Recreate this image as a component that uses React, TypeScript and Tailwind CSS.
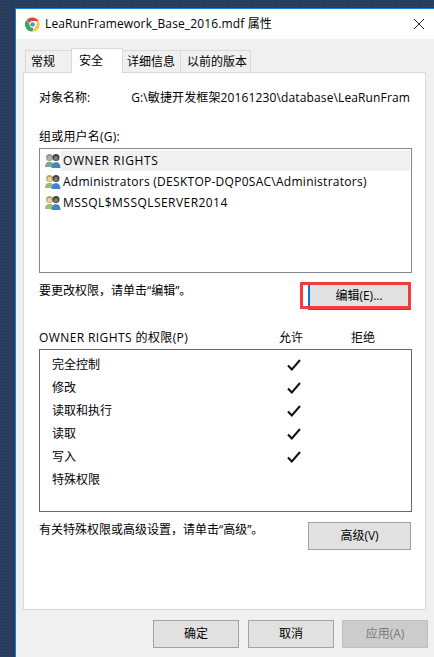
const FONT = "font-['Open_Sans','Noto_Sans_CJK_SC',sans-serif]";

function ChromeIcon() {
  return (
    <svg width="15" height="15" viewBox="0 0 16 16" className="shrink-0">
      <path d="M8 0.5a7.5 7.5 0 0 1 6.5 3.75H8a3.75 3.75 0 0 0-3.4 2.2L2 2.9A7.5 7.5 0 0 1 8 0.5z" fill="#dc4437" />
      <path d="M14.5 4.25A7.5 7.5 0 0 1 8 15.5l3.2-5.6A3.75 3.75 0 0 0 11.2 4.25z" fill="#fbc932" />
      <path d="M8 15.5A7.5 7.5 0 0 1 2 2.9l3.2 5.6A3.75 3.75 0 0 0 9 11.6z" fill="#3aa757" />
      <circle cx="8" cy="8" r="3.2" fill="#fff" />
      <circle cx="8" cy="8" r="2.5" fill="#5a8fe8" />
    </svg>
  );
}

function UsersIcon({ gray }: { gray?: boolean }) {
  const hair = gray ? "#8d9a92" : "#b9a468";
  const face = gray ? "#aab3ab" : "#e6d3a8";
  const body = gray ? "#7fa58c" : "#9dbb72";
  return (
    <svg width="16" height="15" viewBox="0 0 16 15" className="shrink-0">
      <circle cx="4.500" cy="4.500" r="3.500" fill={hair} />
      <circle cx="4.500" cy="5.200" r="2.300" fill={face} />
      <path d="M0 14c0-3.400 1.800-5.200 4.500-5.200S9 10.600 9 14z" fill={body} />
      <circle cx="11" cy="4.500" r="3.500" fill="#3f444a" />
      <circle cx="11" cy="5.300" r="2.200" fill="#8a7360" />
      <path d="M6.500 15c0-3.900 1.800-5.800 4.500-5.800s4.500 1.900 4.500 5.800z" fill="#3f86c4" />
    </svg>
  );
}

function Check() {
  return (
    <svg width="14" height="12" viewBox="0 0 14 12" className="block">
      <path d="M1 6.500 4.800 10.500 13 1" fill="none" stroke="#111" strokeWidth="2" />
    </svg>
  );
}

function Tab({ label, active, cls }: { label: string; active?: boolean; cls: string }) {
  return active ? (
    <div className={`${cls} relative z-10 -mb-px -ml-px flex h-[25px] items-center border border-b-0 border-[#d9d9d9] bg-white text-[12px]`}>
      {label}
    </div>
  ) : (
    <div className={`${cls} -ml-px flex h-[22px] items-center border border-b-0 border-[#d9d9d9] bg-[#f0f0f0] text-[12px]`}>
      {label}
    </div>
  );
}

function Btn({ label, w, disabled }: { label: string; w: string; disabled?: boolean }) {
  return (
    <div
      className={`${w} flex h-[28px] items-center justify-center border text-[12px] ${
        disabled ? "border-[#bfbfbf] bg-[#cccccc] text-[#7a7a7a]" : "border-[#a3a3a3] bg-[#e1e1e1]"
      }`}
    >
      {label}
    </div>
  );
}

const users = [
  { name: "OWNER RIGHTS", gray: true, track: "tracking-[0.6px]" },
  { name: "Administrators (DESKTOP-DQP0SAC\\Administrators)", track: "tracking-[0.27px]" },
  { name: "MSSQL$MSSQLSERVER2014", track: "tracking-[0.45px]" },
];

const perms = [
  { name: "完全控制", on: true },
  { name: "修改", on: true },
  { name: "读取和执行", on: true },
  { name: "读取", on: true },
  { name: "写入", on: true },
  { name: "特殊权限", on: false },
];

export default function App() {
  return (
    <div className="h-[657px] w-[434px] overflow-hidden bg-[#2a3e5f] bg-[radial-gradient(#1f3050_1px,transparent_1px)] bg-[length:3px_3px] pl-[15px] pt-[8px]">
      <div className={`${FONT} h-[660px] w-[430px] border-l border-t border-[#1b7fd6] bg-[#f0f0f0] text-black`}>
        {/* Title bar */}
        <div className="flex h-[30px] items-center bg-white pl-[9px] pr-[14px]">
          <ChromeIcon />
          <span className="ml-[5px] text-[12px] tracking-[0.13px]">LeaRunFramework_Base_2016.mdf 属性</span>
          <svg width="12" height="12" viewBox="0 0 12 12" className="ml-auto mr-[6px]">
            <path d="M1 1 11 11M11 1 1 11" stroke="#222" strokeWidth="1" />
          </svg>
        </div>

        {/* Tabs */}
        <div className="ml-[10px] mt-[9px] flex h-[24px] items-end">
          <Tab label="常规" cls="w-[47px] pl-[5px]" />
          <Tab label="安全" cls="w-[52px] pl-[7px]" active />
          <Tab label="详细信息" cls="w-[59px] pl-[4px]" />
          <Tab label="以前的版本" cls="w-[71px] pl-[6px]" />
        </div>

        {/* Panel */}
        <div className="ml-[7px] h-[538px] w-[403px] border border-[#d9d9d9] bg-white px-[15px]">
          <div className="mt-[16px] flex h-[17px] items-center text-[12px]">
            <span className="w-[95px]">对象名称:</span>
            <span className="whitespace-nowrap tracking-[0.13px]">G:\敏捷开发框架20161230\database\LeaRunFram</span>
          </div>

          <div className="mt-[22px] flex h-[17px] items-center text-[12px] tracking-[0.2px]">组或用户名(G):</div>
          <div className="mt-[3px] h-[125px] w-[373px] border border-[#828790] pl-[5px] pr-[1px] pt-[1px]">
            {users.map((u, i) => (
              <div key={u.name} className="flex h-[21px] items-center">
                <UsersIcon gray={u.gray} />
                <span className={`${u.track} ${i === 0 ? "bg-[#f0f0f0]" : ""} flex h-full flex-1 items-center pl-[2px] text-[12px]`}>
                  {u.name}
                </span>
              </div>
            ))}
          </div>

          <div className="relative mt-[9px] flex h-[28px] w-[372px] items-start justify-between">
            <span className="text-[12px]">{"要更改权限\uFF0C请单击“编辑”。"}</span>
            <div className="flex h-[28px] w-[103px] items-center justify-center border-b border-l-2 border-[#0078d7] bg-[#e1e1e1] pr-[3px] text-[12px]">
              编辑(E)...
            </div>
            {/* red annotation */}
            <div className="absolute right-0 top-0 h-[27px] w-[111px] border-[3px] border-[#f53c3c]" />
          </div>

          <div className="mt-[19px] flex h-[17px] w-[373px] items-center text-[12px]">
            <span className="w-[240px] tracking-[0.4px]">OWNER RIGHTS 的权限(P)</span>
            <span className="w-[72px]">允许</span>
            <span>拒绝</span>
          </div>
          <div className="mt-[3px] h-[163px] w-[373px] border border-[#696969] pl-[12px] pt-[3px]">
            {perms.map((p) => (
              <div key={p.name} className="flex h-[23px] items-center text-[12px]">
                <span className="w-[235px]">{p.name}</span>
                {p.on && <Check />}
              </div>
            ))}
          </div>

          <div className="mt-[10px] flex w-[372px] items-start justify-between">
            <span className="mt-[-1px] text-[12px]">{"有关特殊权限或高级设置\uFF0C请单击“高级”。"}</span>
            <Btn label="高级(V)" w="w-[103px]" />
          </div>
        </div>

        {/* Footer */}
        <div className="ml-[137px] mt-[10px] flex">
          <Btn label="确定" w="w-[86px]" />
          <div className="ml-[9px]">
            <Btn label="取消" w="w-[86px]" />
          </div>
          <div className="ml-[8px]">
            <Btn label="应用(A)" w="w-[86px]" disabled />
          </div>
        </div>
      </div>
    </div>
  );
}
